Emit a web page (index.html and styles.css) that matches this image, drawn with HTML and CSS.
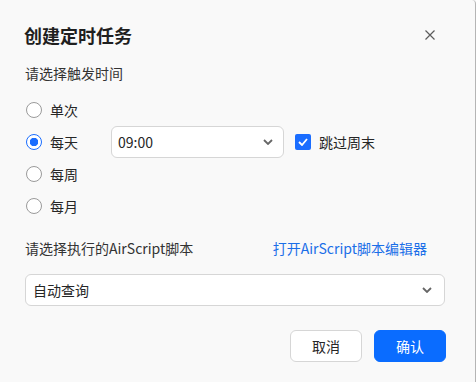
FILE: index.html
```html
<!DOCTYPE html>
<html lang="zh-CN">
  <head>
    <meta charset="UTF-8" />
    <title>创建定时任务</title>
    <link rel="stylesheet" href="styles.css">
  </head>
  <body>
    <div class="dialog">
      <div class="header">
        <h1 class="title">创建定时任务</h1>
        <svg class="close" width="10" height="10" viewBox="0 0 10 10">
          <path d="M0.5 0.5 L9.5 9.5 M9.5 0.5 L0.5 9.5" stroke="#5c5c5c" stroke-width="1.2" fill="none" />
        </svg>
      </div>

      <div class="label first">请选择触发时间</div>

      <div class="row">
        <span class="radio"></span><span class="radio-text">单次</span>
      </div>
      <div class="row">
        <span class="radio checked"></span><span class="radio-text">每天</span>
        <div class="select time">
          <span>09:00</span>
          <svg width="10" height="6" viewBox="0 0 10 6"><path d="M1 1 L5 5 L9 1" stroke="#666" stroke-width="1.8" fill="none" /></svg>
        </div>
        <span class="checkbox">
          <svg width="10" height="8" viewBox="0 0 10 8"><path d="M1 4 L4 7 L9 1" stroke="#fff" stroke-width="1.8" fill="none" /></svg>
        </span>
        <span class="check-text">跳过周末</span>
      </div>
      <div class="row">
        <span class="radio"></span><span class="radio-text">每周</span>
      </div>
      <div class="row">
        <span class="radio"></span><span class="radio-text">每月</span>
      </div>

      <div class="label second">
        <span>请选择执行的AirScript脚本</span>
        <a class="link">打开AirScript脚本编辑器</a>
      </div>

      <div class="select script">
        <span>自动查询</span>
        <svg width="10" height="6" viewBox="0 0 10 6"><path d="M1 1 L5 5 L9 1" stroke="#666" stroke-width="1.8" fill="none" /></svg>
      </div>

      <div class="footer">
        <button class="btn cancel">取消</button>
        <button class="btn ok">确认</button>
      </div>
    </div>
  </body>
</html>
```

FILE: styles.css
```css
html, body {
  margin: 0;
  height: 100%;
}
body {
  background: #f9f9f9;
  font-family: "Noto Sans CJK SC", "Noto Sans", sans-serif;
  font-size: 14px;
  color: #262626;
}
.dialog {
  height: 100%;
  box-sizing: border-box;
  padding: 19px 31px 0 25px;
  border-right: 1px solid #b5b5b5;
  border-top-right-radius: 4px;
}
.header {
  display: flex;
  justify-content: space-between;
  align-items: center;
  height: 32px;
}
.title {
  margin: 0;
  margin-left: -1px;
  font-size: 18px;
  font-weight: bold;
  color: #1f1f1f;
}
.close {
  margin-right: 9px;
}
.label {
  line-height: 22px;
  color: #333;
}
.first {
  margin-top: 11px;
  margin-bottom: 10px;
}
.second {
  margin-top: 15px;
  margin-bottom: 15px;
  display: flex;
  justify-content: space-between;
}
.link {
  color: #1b6fe8;
  margin-right: 17px;
}
.row {
  display: flex;
  align-items: center;
  height: 32px;
}
.radio {
  width: 16px;
  height: 16px;
  box-sizing: border-box;
  border: 1px solid #9a9a9a;
  border-radius: 50%;
  background: #fff;
  margin-left: 1px;
}
.radio.checked {
  border-color: #1a6dff;
  background: radial-gradient(circle, #1a6dff 0 4px, #fff 4.5px);
}
.radio-text {
  margin-left: 8px;
  width: 61px;
}
.select {
  display: flex;
  align-items: center;
  justify-content: space-between;
  box-sizing: border-box;
  height: 32px;
  padding: 0 12px 0 6px;
  background: #fff;
  border: 1px solid #d6d6d6;
  border-radius: 6px;
}
.time {
  width: 173px;
  padding-right: 10px;
}
.script {
  width: 420px;
  padding-left: 7px;
  padding-right: 12px;
}
.checkbox {
  display: flex;
  align-items: center;
  justify-content: center;
  width: 16px;
  height: 16px;
  margin-left: 11px;
  border-radius: 2px;
  background: #1a6dff;
}
.check-text {
  margin-left: 8px;
}
.footer {
  display: flex;
  justify-content: flex-end;
  gap: 12px;
  margin-top: 24px;
  margin-right: -2px;
}
.btn {
  width: 72px;
  height: 32px;
  font-family: inherit;
  font-size: 14px;
  border-radius: 6px;
  border: 1px solid #d6d6d6;
  background: #fff;
  color: #262626;
}
.ok {
  background: #0a6cff;
  border-color: #0a6cff;
  color: #fff;
}
```
